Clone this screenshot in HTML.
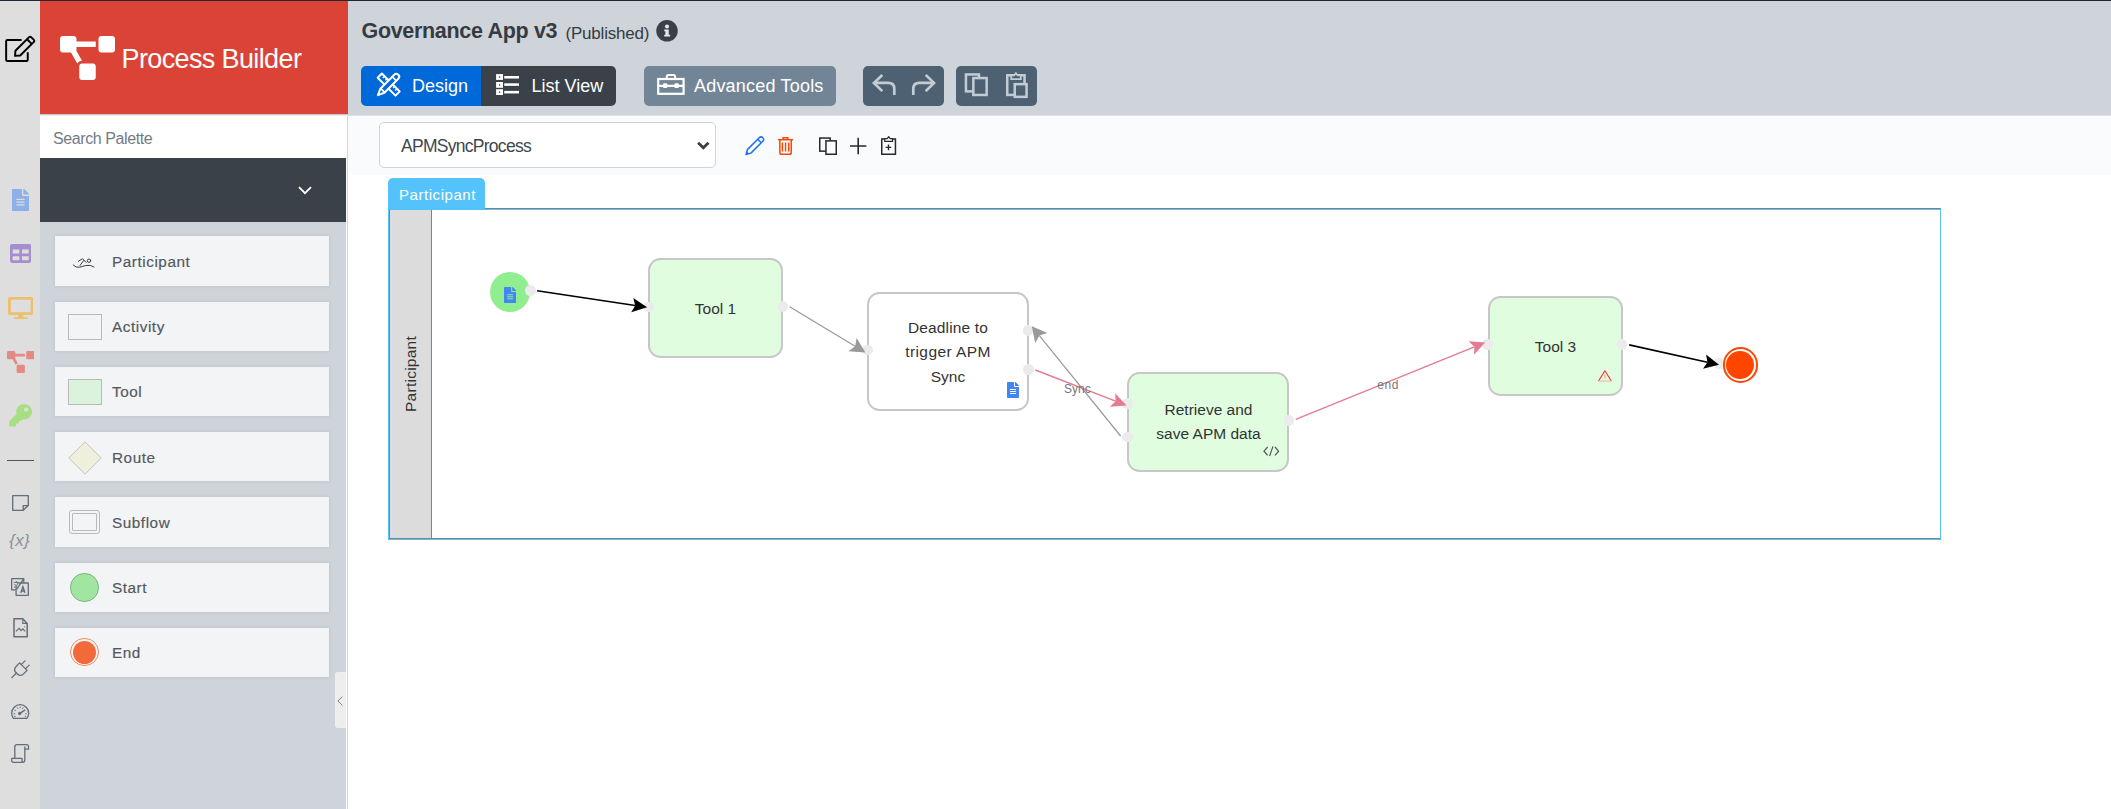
<!DOCTYPE html><html><head><meta charset="utf-8"><title>Process Builder</title><style>
*{box-sizing:border-box;margin:0;padding:0}
html,body{width:2111px;height:809px;overflow:hidden;background:#fff}
body{font-family:"Liberation Sans",sans-serif;color:#333;position:relative}
.abs{position:absolute}
.t{position:absolute;white-space:nowrap;line-height:1}
.pi{position:absolute;left:55px;width:274px;height:49.4px;background:#f3f4f6;box-shadow:0 0 3px rgba(120,130,140,.25)}
.pi span{position:absolute;left:57px;top:.7px;line-height:49.4px;font-size:15.3px;color:#54595e;-webkit-text-stroke:.18px #54595e;white-space:nowrap;letter-spacing:.55px}
.btn{position:absolute;top:66px;height:40px}
.node{position:absolute;border:2px solid #c8c7c8;border-radius:12.5px;background:#e0fde0}
.nt{position:absolute;text-align:center;font-size:15.5px;line-height:24.6px;color:#333}
.ep{position:absolute;width:10.6px;height:10.6px;border-radius:50%;background:#ebebeb}
</style></head><body>
<div class="abs" style="left:0;top:0;width:40px;height:809px;background:#dedede"></div>
<div class="abs" style="left:40px;top:0;width:306px;height:809px;background:#ced4da"></div>
<div class="abs" style="left:346px;top:0;width:1px;height:809px;background:#fdfdfd"></div>
<div class="abs" style="left:347px;top:0;width:1px;height:809px;background:#d2d4d6"></div>
<div class="abs" style="left:348px;top:0;width:1763px;height:115px;background:#ced4da"></div>
<div class="abs" style="left:348px;top:114px;width:1763px;height:2px;background:linear-gradient(#c9cfd5,#e4e7ea)"></div>
<div class="abs" style="left:348px;top:116px;width:1763px;height:58.5px;background:#fafbfc"></div>
<div class="abs" style="left:40px;top:0;width:308px;height:114px;background:#dc4337"></div>
<div class="abs" style="left:40px;top:114px;width:308px;height:44px;background:#fff"></div>
<div class="abs" style="left:40px;top:158px;width:306px;height:63.8px;background:#3a4149"></div>
<div class="abs" style="left:40px;top:114px;width:308px;height:1px;background:#c9c9c9"></div>
<div class="abs" style="left:40px;top:115px;width:308px;height:1px;background:#ececec"></div>
<div class="abs" style="left:347px;top:116px;width:1px;height:693px;background:#d2d4d6"></div>
<div class="abs" style="left:0;top:0;width:2111px;height:1px;background:#1f2737"></div>
<svg style="position:absolute;left:0px;top:30px;overflow:visible" width="40" height="36" viewBox="0 30 40 36" ><g fill="none" stroke="#000" stroke-width="1.95" stroke-linejoin="round"><path d="M21.6 39.95H7.4Q6.15 39.95 6.15 41.2V59.7Q6.15 60.95 7.4 60.95H26.5Q27.75 60.95 27.75 59.7V52.2"/><path d="M29.1 37.1Q30.1 36.1 31.1 37.1L33.9 39.9Q34.9 40.9 33.9 41.9L20.2 55.5L15.1 55.9L15.4 50.8Z"/><path d="M27.1 39.3L31.7 43.9"/></g></svg>
<svg class="abs" style="left:12px;top:188.8px" width="17" height="22" viewBox="0 0 384 512" preserveAspectRatio="none"><path fill="#8eb0e8" d="M224 136V0H24C10.7 0 0 10.7 0 24v464c0 13.3 10.7 24 24 24h336c13.3 0 24-10.7 24-24V160H248c-13.2 0-24-10.8-24-24zm64 236c0 6.6-5.4 12-12 12H108c-6.6 0-12-5.4-12-12v-8c0-6.6 5.4-12 12-12h168c6.6 0 12 5.4 12 12v8zm0-64c0 6.6-5.4 12-12 12H108c-6.6 0-12-5.4-12-12v-8c0-6.6 5.4-12 12-12h168c6.6 0 12 5.4 12 12v8zm0-72v8c0 6.6-5.4 12-12 12H108c-6.6 0-12-5.4-12-12v-8c0-6.6 5.4-12 12-12h168c6.6 0 12 5.4 12 12zm96-114.1v6.1H256V0h6.1c6.4 0 12.5 2.5 17 7l97.9 98c4.5 4.500 7 10.600 7 16.900z"/></svg>
<svg class="abs" style="left:9.7px;top:243.9px" width="21.4" height="18.9" viewBox="0 32 512 448" preserveAspectRatio="none"><path fill="#a58dd0" d="M464 32H48C21.49 32 0 53.49 0 80v352c0 26.51 21.49 48 48 48h416c26.51 0 48-21.49 48-48V80c0-26.51-21.49-48-48-48zM224 416H64v-96h160v96zm0-160H64v-96h160v96zm224 160H288v-96h160v96zm0-160H288v-96h160v96z"/></svg>
<svg class="abs" style="left:7.8px;top:296.6px" width="25.5" height="22.3" viewBox="0 0 576 512" preserveAspectRatio="none"><path fill="#ecc06e" d="M528 0H48C21.5 0 0 21.5 0 48v320c0 26.5 21.5 48 48 48h192l-16 48h-72c-13.3 0-24 10.7-24 24s10.7 24 24 24h272c13.3 0 24-10.7 24-24s-10.7-24-24-24h-72l-16-48h192c26.5 0 48-21.5 48-48V48c0-26.5-21.5-48-48-48zm-16 352H64V64h448v288z"/></svg>
<svg class="abs" style="left:6.9px;top:350.6px" width="27.5" height="22" viewBox="0 0 640 512" preserveAspectRatio="none"><path fill="#e38a84" d="M384 320H256c-17.67 0-32 14.33-32 32v128c0 17.67 14.33 32 32 32h128c17.67 0 32-14.33 32-32V352c0-17.67-14.33-32-32-32zM192 32c0-17.67-14.33-32-32-32H32C14.33 0 0 14.33 0 32v128c0 17.67 14.33 32 32 32h95.72l73.16 128.04C211.98 300.98 232.4 288 256 288h.28L192 175.51V128h224V64H192V32zM608 0H480c-17.67 0-32 14.33-32 32v128c0 17.67 14.33 32 32 32h128c17.67 0 32-14.33 32-32V32c0-17.67-14.33-32-32-32z"/></svg>
<svg class="abs" style="left:8.9px;top:404.3px" width="23" height="22.4" viewBox="0 0 512 512" preserveAspectRatio="none"><path fill="#a9df84" d="M512 176.001C512 273.203 433.202 352 336 352c-11.22 0-22.19-1.062-32.827-3.069l-24.012 27.014A23.999 23.999 0 0 1 261.223 384H224v40c0 13.255-10.745 24-24 24h-40v40c0 13.255-10.745 24-24 24H24c-13.255 0-24-10.745-24-24v-78.059c0-6.365 2.529-12.47 7.029-16.971l161.802-161.802C163.108 213.814 160 195.271 160 176 160 78.798 238.797.001 335.999 0 433.488-.001 512 78.511 512 176.001zM336 128c0 26.51 21.49 48 48 48s48-21.49 48-48-21.49-48-48-48-48 21.49-48 48z"/></svg>
<div class="abs" style="left:7px;top:460px;width:27px;height:1px;background:#4d545c"></div>
<svg style="position:absolute;left:11.5px;top:495px;overflow:visible" width="17" height="16" viewBox="0 0 17 16" ><path d="M0.7 0.7H16.3V10.6L11.2 15.3H0.7Z M16.3 10.6H11.2V15.3" fill="none" stroke="#656d76" stroke-width="1.3" stroke-linejoin="round"/></svg>
<div class="t" style="left:9.3px;top:532px;font-size:17px;font-style:italic;color:#8a9199;letter-spacing:.3px">{x}</div>
<svg style="position:absolute;left:11px;top:578px;overflow:visible" width="18" height="18" viewBox="0 0 18 18" ><g fill="none" stroke="#656d76" stroke-width="1.3" stroke-linejoin="round"><path d="M5 11.9H.65V.65H12.75V4.6"/><path d="M12.75 .65L5.6 11.4"/><path d="M7.4 5H17.3V17.3H5.1V9"/></g><path d="M9.9 14.8L11.9 8.8L13.9 14.8M10.5 13H13.3" fill="none" stroke="#656d76" stroke-width="1.5"/><path d="M2.8 4.4H7.6M5.4 3.2V4.4M3 9.4C5.2 8.4 6.6 6.8 7 4.4M3.6 6C4.2 7.2 5 8 6 8.6" fill="none" stroke="#656d76" stroke-width="1"/></svg>
<svg style="position:absolute;left:12.5px;top:618px;overflow:visible" width="15" height="19.6" viewBox="0 0 15 19.6" ><path d="M1 .8H9.8L14.2 5.4V18.8H1Z" fill="none" stroke="#656d76" stroke-width="1.5" stroke-linejoin="round"/><path d="M9.8 .8V5.4H14.2" fill="none" stroke="#656d76" stroke-width="1.1"/><path d="M2.9 13.4L6.2 10.4L8.1 12.6L9.9 10.8L12.1 13.4" fill="none" stroke="#656d76" stroke-width="1.2"/><circle cx="11.5" cy="8.8" r=".55" fill="#656d76"/></svg>
<svg style="position:absolute;left:11px;top:660px;overflow:visible" width="19" height="19" viewBox="0 0 19 19" ><g fill="none" stroke="#656d76" stroke-width="1.3" stroke-linecap="round" stroke-linejoin="round"><path d="M.8 17.6L5.2 13.2"/><path d="M8.6 2.9L16.1 10.4L12 14.4Q9.2 16.5 6.4 14L4.7 12.3Q2.4 9.6 4.8 6.8Z"/><path d="M10.4 4.4L14 .9M14.6 8.6L18.1 5.1"/></g></svg>
<svg style="position:absolute;left:11px;top:704.4px;overflow:visible" width="18.4" height="15" viewBox="0 0 18.4 15" ><g fill="none" stroke="#656d76" stroke-width="1.3" stroke-linecap="round"><path d="M2.4 14.3Q.7 12.4 .7 9.2A8.5 8.5 0 0 1 17.700 9.2Q17.7 12.400 16 14.300Z" stroke-linejoin="round"/><path d="M8.8 9.4L13.800 6.200" stroke-width="1.5"/><circle cx="8.7" cy="9.5" r="1" fill="#656d76"/><path d="M3 9.800H3.800M3.800 6.200L4.500 6.600M6.400 3.800L6.800 4.500M9.200 3V3.800M12 3.800L11.600 4.500M14.600 9.800H15.400M3.600 12.400H4.200M14.200 12.400H14.800" stroke-width="1"/></g></svg>
<svg style="position:absolute;left:11px;top:744.4px;overflow:visible" width="18" height="19" viewBox="0 0 18 19" ><g fill="none" stroke="#656d76" stroke-width="1.3" stroke-linejoin="round"><path d="M3.800 14.200V2.800Q3.800 .700 5.900 .700H15.400Q17.500 .700 17.500 2.800V5.200H13.800"/><path d="M13.800 2.600V16Q13.800 18.400 11.600 18.400H2.600Q.700 18.400 .700 16.400V14.400H11V16.400Q11 18.400 12 18.400"/></g></svg>
<svg class="abs" style="left:60px;top:36px" width="55" height="44" viewBox="0 0 640 512"><path fill="#fff" d="M384 320H256c-17.67 0-32 14.33-32 32v128c0 17.67 14.33 32 32 32h128c17.67 0 32-14.33 32-32V352c0-17.67-14.33-32-32-32zM192 32c0-17.67-14.33-32-32-32H32C14.33 0 0 14.33 0 32v128c0 17.67 14.33 32 32 32h95.72l73.16 128.04C211.98 300.98 232.4 288 256 288h.28L192 175.51V128h224V64H192V32zM608 0H480c-17.67 0-32 14.33-32 32v128c0 17.67 14.33 32 32 32h128c17.67 0 32-14.33 32-32V32c0-17.67-14.33-32-32-32z"/></svg>
<div class="t" style="left:121.5px;top:46px;font-size:27px;color:#fff;letter-spacing:-.62px">Process Builder</div>
<div class="t" style="left:53px;top:130.5px;font-size:16px;color:#727b84;letter-spacing:-.4px">Search Palette</div>
<svg style="position:absolute;left:298px;top:186px;overflow:visible" width="14" height="9" viewBox="0 0 14 9" ><path d="M1 1.2L7 7.2L13 1.2" fill="none" stroke="#fff" stroke-width="1.8"/></svg>
<div class="pi" style="top:236.3px"><span style="letter-spacing:.55px">Participant</span></div>
<div class="pi" style="top:301.5px"><span>Activity</span></div>
<div class="pi" style="top:366.8px"><span>Tool</span></div>
<div class="pi" style="top:432.1px"><span>Route</span></div>
<div class="pi" style="top:497.4px"><span>Subflow</span></div>
<div class="pi" style="top:562.6px"><span>Start</span></div>
<div class="pi" style="top:627.8px"><span>End</span></div>
<svg style="position:absolute;left:72px;top:257px;overflow:visible" width="23" height="12" viewBox="0 0 23 12" ><g fill="none" stroke="#3c3c3c" stroke-width="1" stroke-linecap="round" stroke-linejoin="round"><circle cx="17" cy="3.700" r="1.700"/><path d="M6.400 4.300L10.500 1.700L14.100 5.400"/><path d="M11.600 3.600L8 8.500"/><path d="M1.200 8Q4 11 7.600 10.200Q11 9.300 13.800 8.500Q18.500 7.500 22 9.900"/></g></svg>
<div class="abs" style="left:68px;top:314px;width:34px;height:26px;border:1px solid #b9b9b9;background:#f3f4f6"></div>
<div class="abs" style="left:68px;top:379px;width:34px;height:26px;border:1px solid #b9b9b9;background:#dbf3dd"></div>
<svg style="position:absolute;left:68px;top:441px;overflow:visible" width="34" height="34" viewBox="0 0 34 34" ><path d="M17 .8L33.2 17L17 33.2L.8 17Z" fill="#eef0dc" stroke="#c4c4c4" stroke-width="1"/></svg>
<div class="abs" style="left:69px;top:510px;width:31px;height:24px;border:1px solid #b9b9b9;border-radius:3px;background:#f3f4f6"></div>
<div class="abs" style="left:72px;top:513px;width:25px;height:18px;border:1px solid #b9b9b9;border-radius:1px;background:#f3f4f6"></div>
<div class="abs" style="left:70.4px;top:573.4px;width:28.4px;height:28.4px;border:1px solid #7fb17f;border-radius:50%;background:#a0e6a0"></div>
<div class="abs" style="left:70.4px;top:638px;width:28.4px;height:28.4px;border:1px solid #f28b62;border-radius:50%;background:#f3f4f6"></div>
<div class="abs" style="left:73px;top:640.6px;width:23.2px;height:23.2px;border-radius:50%;background:#f26a3a"></div>
<div class="abs" style="left:334.5px;top:672.4px;width:11.5px;height:55.4px;background:#eee;border-radius:3px 0 0 3px"></div>
<svg style="position:absolute;left:337px;top:696px;overflow:visible" width="6" height="10" viewBox="0 0 6 10" ><path d="M5.4 .6L.9 5L5.4 9.4" fill="none" stroke="#7d848b" stroke-width="1"/></svg>
<div class="t" style="left:361.5px;top:21px;font-size:21.5px;font-weight:bold;color:#353b41;letter-spacing:-.32px">Governance App v3</div>
<div class="t" style="left:565.5px;top:25.1px;font-size:17px;color:#353b41;letter-spacing:-.2px">(Published)</div>
<svg style="position:absolute;left:656px;top:19.8px;overflow:visible" width="22" height="22" viewBox="0 0 22 22" ><circle cx="11" cy="10.800" r="10.750" fill="#394047"/><circle cx="11" cy="6.500" r="2.050" fill="#e4e8ec"/><path d="M8.200 9.400H12.700V14.800H14.100V16.500H8.200V14.800H9.400V11.200H8.200Z" fill="#e4e8ec"/></svg>
<div class="btn" style="left:361px;width:120px;background:#0069d9;border-radius:5px 0 0 5px"></div>
<div class="btn" style="left:481px;width:135px;background:#3a4149;border-radius:0 5px 5px 0"></div>
<div class="btn" style="left:644px;width:192px;background:#728596;border-radius:5px"></div>
<div class="btn" style="left:863px;width:81px;background:#4e6172;border-radius:5px"></div>
<div class="btn" style="left:956px;width:81px;background:#4e6172;border-radius:5px"></div>
<div class="t" style="left:412px;top:76.5px;font-size:18px;color:#fff">Design</div>
<div class="t" style="left:531.5px;top:76.5px;font-size:18px;color:#fff">List View</div>
<div class="t" style="left:694px;top:76.5px;font-size:18px;color:#fff;letter-spacing:.2px">Advanced Tools</div>
<div class="abs" style="left:379px;top:122px;width:337px;height:46px;border:1px solid #ced4da;border-radius:5px;background:#fff"></div>
<div class="t" style="left:401px;top:137.500px;font-size:17.500px;color:#41474e;letter-spacing:-.720px">APMSyncProcess</div>
<svg class="abs" style="left:0;top:0" width="2111" height="180" viewBox="0 0 2111 180"><g transform="translate(388.7,84.6) rotate(45)" fill="none" stroke="#fff"><rect x="-12.6" y="-3" width="25.200" height="6" stroke-width="2" stroke-linejoin="round"/><path d="M-8.800 -3V-.4M-5.400 -3V-.8M5.400 -3V-.8M8.800 -3V-.4" stroke-width="1.500"/></g><g transform="translate(377,96.100) rotate(-45)"><path d="M1.300 0L7.600 -2.850H27.300A2.850 2.850 0 0 1 27.300 2.850H7.600Z" fill="#0069d9" stroke="#fff" stroke-width="2" stroke-linejoin="round"/><path d="M24.500 -2.850V2.850M8 -2.850V2.850" stroke="#fff" stroke-width="1.700"/><path d="M1 0L3.800 -1.300V1.300Z" fill="#fff"/></g><rect x="496.100" y="74.1" width="6.900" height="5.800" fill="#fff"/><rect x="498.900" y="76.4" width="1.300" height="1.300" fill="#30363c"/><rect x="504.200" y="76" width="14.800" height="2.550" fill="#fff"/><rect x="496.100" y="82" width="6.900" height="5.800" fill="#fff"/><rect x="498.900" y="84.3" width="1.300" height="1.300" fill="#30363c"/><rect x="504.200" y="83.3" width="14.800" height="2.550" fill="#fff"/><rect x="496.100" y="89.2" width="6.900" height="5.800" fill="#fff"/><rect x="498.900" y="91.5" width="1.300" height="1.300" fill="#30363c"/><rect x="504.200" y="90.9" width="14.800" height="2.550" fill="#fff"/><g fill="none" stroke="#fff"><rect x="658.200" y="79" width="25.400" height="14.800" stroke-width="2.200"/><path d="M666.800 78.800V76.700Q666.800 75.100 668.400 75.100H673.500Q675.100 75.100 675.100 76.700V78.800" stroke-width="2"/><path d="M658.200 85.850H683.600" stroke-width="2.200"/></g><rect x="663" y="83.300" width="4.300" height="4.800" rx="1" fill="#fff"/><rect x="674.500" y="83.300" width="4.300" height="4.800" rx="1" fill="#fff"/><g fill="none" stroke="#c3ccd4" stroke-width="2.700"><path d="M882.300 74.900L873.900 82.900L882.300 91.100"/><path d="M874.600 82.900H888.300Q894.300 82.900 894.300 88.900V94.900"/><path d="M925.700 74.900L934 82.900L925.700 91.100"/><path d="M933.300 82.900H919.300Q913.300 82.900 913.300 88.900V94.900"/></g><g fill="#4e6172" stroke="#c3ccd4" stroke-width="2.500"><rect x="965.950" y="74.450" width="13" height="16.900"/><rect x="973.350" y="78.050" width="13.300" height="16.900"/><rect x="1007.250" y="75.250" width="17.300" height="19.700"/><path d="M1011.200 79.100V75.400H1014.200L1015.900 73.300L1017.600 75.400H1020.800V79.100Z" stroke-width="1.800"/><rect x="1014.750" y="84.150" width="11.800" height="12.700"/></g><path d="M698.100 142.700L703.300 147.800L708.500 142.700" fill="none" stroke="#3a3e43" stroke-width="2.700"/><g transform="translate(745.600,154.900) rotate(-45)" fill="none" stroke="#1f6fff" stroke-width="1.500" stroke-linejoin="round"><path d="M.600 0L5 -2.500H21.800A2.500 2.500 0 0 1 21.800 2.500H5Z"/><path d="M19.600 -2.500V2.500"/><path d="M.600 0L3.400 -1.400V1.400Z" fill="#1f6fff" stroke="none"/></g><g fill="none" stroke="#ff4500" stroke-width="1.500"><path d="M778 139.700H793"/><path d="M783.200 139.500V137.750H787.800V139.500"/><path d="M779.850 140V152.400Q779.850 154.250 781.700 154.250H789.400Q791.250 154.250 791.250 152.400V140"/><path d="M782.400 142.600V151.600M785.550 142.600V151.600M788.700 142.600V151.600" stroke-width="1.400"/></g><g fill="#fafbfc" stroke="#26292d" stroke-width="1.500"><rect x="819.750" y="138.050" width="10.400" height="13.100"/><rect x="825.950" y="140.850" width="10.300" height="13.400"/></g><path d="M858.200 137.700V154.300M850 146H866.400" fill="none" stroke="#26292d" stroke-width="1.600"/><g fill="none" stroke="#26292d" stroke-width="1.500"><path d="M884.600 139.050H881.750V154.250H895.450V139.050H892.600"/><path d="M884.700 141.300V138.700H887.200L888.700 136.700L890.200 138.700H892.600V141.300Z" stroke-width="1.200" fill="#fafbfc"/><path d="M888.500 144.600V150.200M885.700 147.400H891.300" stroke-width="1.400"/></g></svg>
<div class="abs" style="left:388px;top:178px;width:97px;height:32px;background:#55c3fb;border-radius:5px 5px 0 0"></div>
<div class="t" style="left:399px;top:186.5px;font-size:15px;color:#fff;letter-spacing:.55px">Participant</div>
<div class="abs" style="left:388px;top:209px;width:1553px;height:331px;border:1px solid #55c3fb"></div>
<div class="abs" style="left:485px;top:208px;width:1456px;height:1px;background:#86807e"></div>
<div class="abs" style="left:389px;top:210px;width:43px;height:329px;background:#dcdcdc;border:1px solid #86807e;border-top:0"></div>
<div class="abs" style="left:431px;top:538px;width:1509px;height:1px;background:#86807e"></div>
<div class="t" style="left:410.5px;top:374px;font-size:15.5px;color:#333;letter-spacing:.25px;transform:translate(-50%,-50%) rotate(-90deg)">Participant</div>
<div class="abs" style="left:490px;top:272px;width:40px;height:40px;border-radius:50%;background:#90ee90"></div>
<svg class="abs" style="left:504.2px;top:286.8px" width="12.3" height="16.3" viewBox="0 0 384 512"><path fill="#4285f4" d="M224 136V0H24C10.7 0 0 10.7 0 24v464c0 13.3 10.7 24 24 24h336c13.3 0 24-10.7 24-24V160H248c-13.2 0-24-10.8-24-24zm64 236c0 6.6-5.400 12-12 12H108c-6.600 0-12-5.400-12-12v-8c0-6.600 5.400-12 12-12h168c6.600 0 12 5.400 12 12v8zm0-64c0 6.600-5.400 12-12 12H108c-6.600 0-12-5.400-12-12v-8c0-6.600 5.400-12 12-12h168c6.600 0 12 5.400 12 12v8zm0-72v8c0 6.600-5.400 12-12 12H108c-6.600 0-12-5.400-12-12v-8c0-6.600 5.400-12 12-12h168c6.600 0 12 5.400 12 12zm96-114.100v6.100H256V0h6.100c6.400 0 12.500 2.500 17 7l97.900 98c4.500 4.500 7 10.600 7 16.900z"/></svg>
<div class="node" style="left:648px;top:258px;width:135px;height:100px"></div>
<div class="nt" style="left:648px;top:296.6px;width:135px">Tool 1</div>
<div class="node" style="left:867.2px;top:291.8px;width:161.8px;height:118.9px;background:#fff"></div>
<div class="nt" style="left:867px;top:315.7px;width:162px"><span style="letter-spacing:.15px">Deadline to</span><br><span style="letter-spacing:.42px">trigger APM</span><br>Sync</div>
<svg class="abs" style="left:1007.4px;top:381.7px" width="12" height="16" viewBox="0 0 384 512"><path fill="#4285f4" d="M224 136V0H24C10.7 0 0 10.7 0 24v464c0 13.3 10.7 24 24 24h336c13.3 0 24-10.7 24-24V160H248c-13.2 0-24-10.8-24-24zm64 236c0 6.6-5.400 12-12 12H108c-6.600 0-12-5.400-12-12v-8c0-6.600 5.400-12 12-12h168c6.600 0 12 5.400 12 12v8zm0-64c0 6.600-5.400 12-12 12H108c-6.600 0-12-5.400-12-12v-8c0-6.600 5.400-12 12-12h168c6.600 0 12 5.400 12 12v8zm0-72v8c0 6.600-5.400 12-12 12H108c-6.600 0-12-5.400-12-12v-8c0-6.600 5.400-12 12-12h168c6.600 0 12 5.400 12 12zm96-114.100v6.100H256V0h6.100c6.400 0 12.500 2.500 17 7l97.900 98c4.500 4.500 7 10.600 7 16.900z"/></svg>
<div class="node" style="left:1127.2px;top:371.8px;width:161.8px;height:100px"></div>
<div class="nt" style="left:1128px;top:397.5px;width:161px">Retrieve and<br>save APM data</div>
<svg style="position:absolute;left:1263.3px;top:446.2px;overflow:visible" width="16.6" height="10.4" viewBox="0 0 16.6 10.4" ><path d="M4.6 1L1 5.2L4.6 9.4M12 1L15.6 5.2L12 9.4M10 .4L6.6 10" fill="none" stroke="#555" stroke-width="1.2"/></svg>
<div class="node" style="left:1488.2px;top:295.8px;width:135px;height:100px"></div>
<div class="nt" style="left:1488px;top:334.8px;width:135px">Tool 3</div>
<svg style="position:absolute;left:1598px;top:370px;overflow:visible" width="14" height="12" viewBox="0 0 14 12" ><path d="M.5 11L6.900 .700L13.300 11" fill="none" stroke="#f5364c" stroke-width="1.200" stroke-linejoin="round"/><path d="M.600 11.100H13.200" stroke="#f4b09a" stroke-width="1"/><path d="M6.900 4.800V7.800" stroke="#f39a5b" stroke-width="1.100"/><path d="M6.900 8.400V9.400" stroke="#f3c7a8" stroke-width="1"/></svg>
<div class="ep" style="left:525.2px;top:285.0px"></div>
<div class="ep" style="left:643.4px;top:301.5px"></div>
<div class="ep" style="left:777.7px;top:301.4px"></div>
<div class="ep" style="left:862.1px;top:344.9px"></div>
<div class="ep" style="left:1022.6px;top:325.0px"></div>
<div class="ep" style="left:1023.1px;top:364.3px"></div>
<div class="ep" style="left:1122.3px;top:398.2px"></div>
<div class="ep" style="left:1122.3px;top:431.5px"></div>
<div class="ep" style="left:1283.9px;top:415.0px"></div>
<div class="ep" style="left:1482.4px;top:339.0px"></div>
<div class="ep" style="left:1616.8px;top:339.0px"></div>
<div class="ep" style="left:1714.3px;top:358.2px"></div>
<div class="abs" style="left:1722.5px;top:347.2px;width:35.6px;height:35.6px;border-radius:50%;border:2px solid #ff4500;background:#fff"></div>
<div class="abs" style="left:1726.3px;top:351px;width:28px;height:28px;border-radius:50%;background:#ff4500"></div>
<svg class="abs" style="left:0;top:0" width="2111" height="809" viewBox="0 0 2111 809"><path d="M537.1 290.8L635.2 305.5" stroke="#000" stroke-width="1.6" fill="none"/><path d="M647.1 307.3L631.2 312.3L635.2 305.5L633.3 297.9Z" fill="#000"/><path d="M789.7 306.7L855.1 346.2" stroke="#999" stroke-width="1.2" fill="none"/><path d="M865.4 352.4L848.5 351.3L855.1 346.2L856.6 338.0Z" fill="#999"/><path d="M1120.6 436.0L1039.4 335.6" stroke="#999" stroke-width="1.2" fill="none"/><path d="M1031.8 326.3L1047.3 333.1L1039.4 335.6L1035.2 342.9Z" fill="#999"/><path d="M1035.3 370.0L1115.6 401.2" stroke="#e57b93" stroke-width="1.4" fill="none"/><path d="M1126.5 405.4L1109.9 406.8L1115.6 401.2L1115.2 393.2Z" fill="#e57b93"/><path d="M1295.7 419.3L1474.4 346.8" stroke="#e57b93" stroke-width="1.4" fill="none"/><path d="M1485.2 342.4L1474.0 354.8L1474.4 346.8L1468.6 341.3Z" fill="#e57b93"/><path d="M1629.2 344.9L1707.4 362.2" stroke="#000" stroke-width="1.6" fill="none"/><path d="M1719.0 364.8L1703.0 368.7L1707.4 362.2L1706.1 354.5Z" fill="#000"/></svg>
<div class="t" style="left:1077.3px;top:388.6px;font-size:12px;color:#777;transform:translate(-50%,-50%)">Sync</div>
<div class="t" style="left:1388.1px;top:385.1px;font-size:12px;letter-spacing:.5px;color:#777;transform:translate(-50%,-50%)">end</div>
</body></html>
